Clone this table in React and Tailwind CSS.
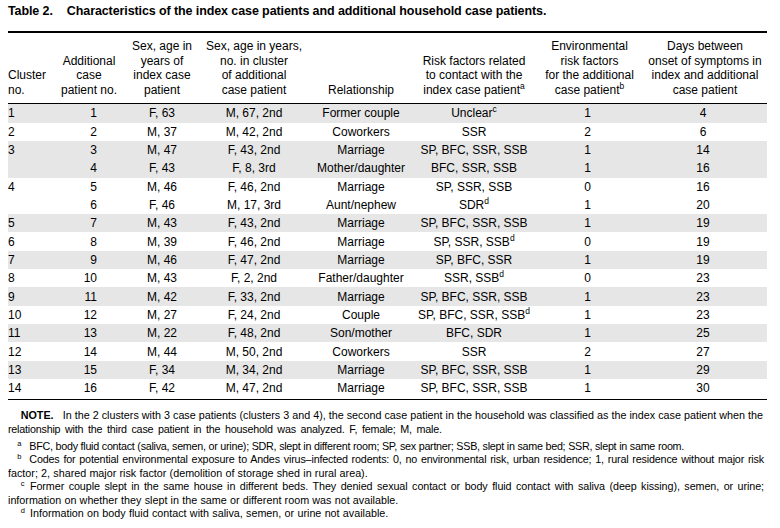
import React from "react";

const rows = [
  { c: "1", n: "1", idx: "F, 63", add: "M, 67, 2nd", rel: "Former couple", risk: "Unclear", rs: "c", env: "1", days: "4", sh: true },
  { c: "2", n: "2", idx: "M, 37", add: "M, 42, 2nd", rel: "Coworkers", risk: "SSR", env: "2", days: "6", sh: false },
  { c: "3", n: "3", idx: "M, 47", add: "F, 43, 2nd", rel: "Marriage", risk: "SP, BFC, SSR, SSB", env: "1", days: "14", sh: true },
  { c: "", n: "4", idx: "F, 43", add: "F, 8, 3rd", rel: "Mother/daughter", risk: "BFC, SSR, SSB", env: "1", days: "16", sh: true },
  { c: "4", n: "5", idx: "M, 46", add: "F, 46, 2nd", rel: "Marriage", risk: "SP, SSR, SSB", env: "0", days: "16", sh: false },
  { c: "", n: "6", idx: "F, 46", add: "M, 17, 3rd", rel: "Aunt/nephew", risk: "SDR", rs: "d", env: "1", days: "20", sh: false },
  { c: "5", n: "7", idx: "M, 43", add: "F, 43, 2nd", rel: "Marriage", risk: "SP, BFC, SSR, SSB", env: "1", days: "19", sh: true },
  { c: "6", n: "8", idx: "M, 39", add: "F, 46, 2nd", rel: "Marriage", risk: "SP, SSR, SSB", rs: "d", env: "0", days: "19", sh: false },
  { c: "7", n: "9", idx: "M, 46", add: "F, 47, 2nd", rel: "Marriage", risk: "SP, BFC, SSR", env: "1", days: "19", sh: true },
  { c: "8", n: "10", idx: "M, 43", add: "F, 2, 2nd", rel: "Father/daughter", risk: "SSR, SSB", rs: "d", env: "0", days: "23", sh: false },
  { c: "9", n: "11", idx: "M, 42", add: "F, 33, 2nd", rel: "Marriage", risk: "SP, BFC, SSR, SSB", env: "1", days: "23", sh: true },
  { c: "10", n: "12", idx: "M, 27", add: "F, 24, 2nd", rel: "Couple", risk: "SP, BFC, SSR, SSB", rs: "d", env: "1", days: "23", sh: false },
  { c: "11", n: "13", idx: "M, 22", add: "F, 48, 2nd", rel: "Son/mother", risk: "BFC, SDR", env: "1", days: "25", sh: true },
  { c: "12", n: "14", idx: "M, 44", add: "M, 50, 2nd", rel: "Coworkers", risk: "SSR", env: "2", days: "27", sh: false },
  { c: "13", n: "15", idx: "F, 34", add: "M, 34, 2nd", rel: "Marriage", risk: "SP, BFC, SSR, SSB", env: "1", days: "29", sh: true },
  { c: "14", n: "16", idx: "F, 42", add: "M, 47, 2nd", rel: "Marriage", risk: "SP, BFC, SSR, SSB", env: "1", days: "30", sh: false },
];

const grid = "grid grid-cols-[48px_66px_80px_104px_110px_116px_111px_124px]";
const just = "text-justify [text-align-last:justify] whitespace-nowrap";

function Sup({ children }) {
  return <span className="relative -top-[5px] text-[8.5px] leading-none align-baseline">{children}</span>;
}

function NSup({ children, w }) {
  return (
    <span className={`inline-block ${w} text-[7.5px] leading-none relative -top-[4px] tracking-normal`}>{children}</span>
  );
}

export default function App() {
  return (
    <div className="w-[780px] h-[528px] bg-white text-black font-['Liberation_Sans',Arial,sans-serif] overflow-hidden">
      <div className="pl-[8px] pt-[4px] w-[767px]">
        <div className="text-[12.5px] leading-[15px] font-bold tracking-[-0.1px] whitespace-nowrap">
          <span className="mr-[14px]">Table 2.</span>
          Characteristics of the index case patients and additional household case patients.
        </div>

        <div className="mt-[12px] h-[1.5px] bg-black" />

        <div className={`${grid} text-[12px] leading-[14.67px] pt-[6.5px] pb-[5px] whitespace-nowrap`}>
          <div className="self-end text-left">Cluster<br />no.</div>
          <div className="self-end text-center">Additional<br />case<br />patient no.</div>
          <div className="self-end text-center">Sex, age in<br />years of<br />index case<br />patient</div>
          <div className="self-end text-center">Sex, age in years,<br />no. in cluster<br />of additional<br />case patient</div>
          <div className="self-end text-center">Relationship</div>
          <div className="self-end text-center">Risk factors related<br />to contact with the<br />index case patient<Sup>a</Sup></div>
          <div className="self-end text-center pl-[4px]">Environmental<br />risk factors<br />for the additional<br />case patient<Sup>b</Sup></div>
          <div className="self-end text-center">Days between<br />onset of symptoms in<br />index and additional<br />case patient</div>
        </div>

        <div className="h-[1.5px] bg-black" />

        <div className="text-[12px] whitespace-nowrap">
          {rows.map((r, i) => (
            <div key={i} className={`${grid} h-[18.33px] items-center ${r.sh ? "bg-[#e6e6e6]" : "bg-white"}`}>
              <div className="text-left">{r.c}</div>
              <div className="text-right pr-[25px]">{r.n}</div>
              <div className="text-center">{r.idx}</div>
              <div className="text-center">{r.add}</div>
              <div className="text-center">{r.rel}</div>
              <div className="text-center">
                {r.risk}
                {r.rs ? <Sup>{r.rs}</Sup> : null}
              </div>
              <div className="text-center">{r.env}</div>
              <div className="text-center pr-[4px]">{r.days}</div>
            </div>
          ))}
        </div>

        <div className="mt-[1.5px] h-[1.5px] bg-black" />

        <div className="text-[10.75px] leading-[13.5px] mt-[9px]">
          <div className={`w-[755px] pl-[12.7px] ${just}`}>
            <span className="inline-block w-[42px] font-bold">NOTE.</span>In the 2 clusters with 3 case patients (clusters 3 and 4), the second case patient in the household was classified as the index case patient when the
          </div>
          <div className={`w-[433.7px] tracking-[-0.22px] ${just}`}>
            relationship with the third case patient in the household was analyzed. F, female; M, male.
          </div>

          <div className={`mt-[3.5px] w-[676px] pl-[9.3px] tracking-[-0.28px] ${just}`}>
            <NSup w="w-[12px]">a</NSup>BFC, body fluid contact (saliva, semen, or urine); SDR, slept in different room; SP, sex partner; SSB, slept in same bed; SSR, slept in same room.
          </div>
          <div className={`w-[756px] pl-[9.3px] tracking-[-0.16px] ${just}`}>
            <NSup w="w-[12px]">b</NSup>Codes for potential environmental exposure to Andes virus–infected rodents: 0, no environmental risk, urban residence; 1, rural residence without major risk
          </div>
          <div className={`w-[359.7px] ${just}`}>
            factor; 2, shared major risk factor (demolition of storage shed in rural area).
          </div>
          <div className={`w-[756px] pl-[12.7px] tracking-[-0.08px] ${just}`}>
            <NSup w="w-[9.3px]">c</NSup>Former couple slept in the same house in different beds. They denied sexual contact or body fluid contact with saliva (deep kissing), semen, or urine;
          </div>
          <div className={`w-[390.3px] ${just}`}>
            information on whether they slept in the same or different room was not available.
          </div>
          <div className={`w-[380.3px] pl-[12.7px] ${just}`}>
            <NSup w="w-[9.3px]">d</NSup>Information on body fluid contact with saliva, semen, or urine not available.
          </div>
        </div>
      </div>
    </div>
  );
}
